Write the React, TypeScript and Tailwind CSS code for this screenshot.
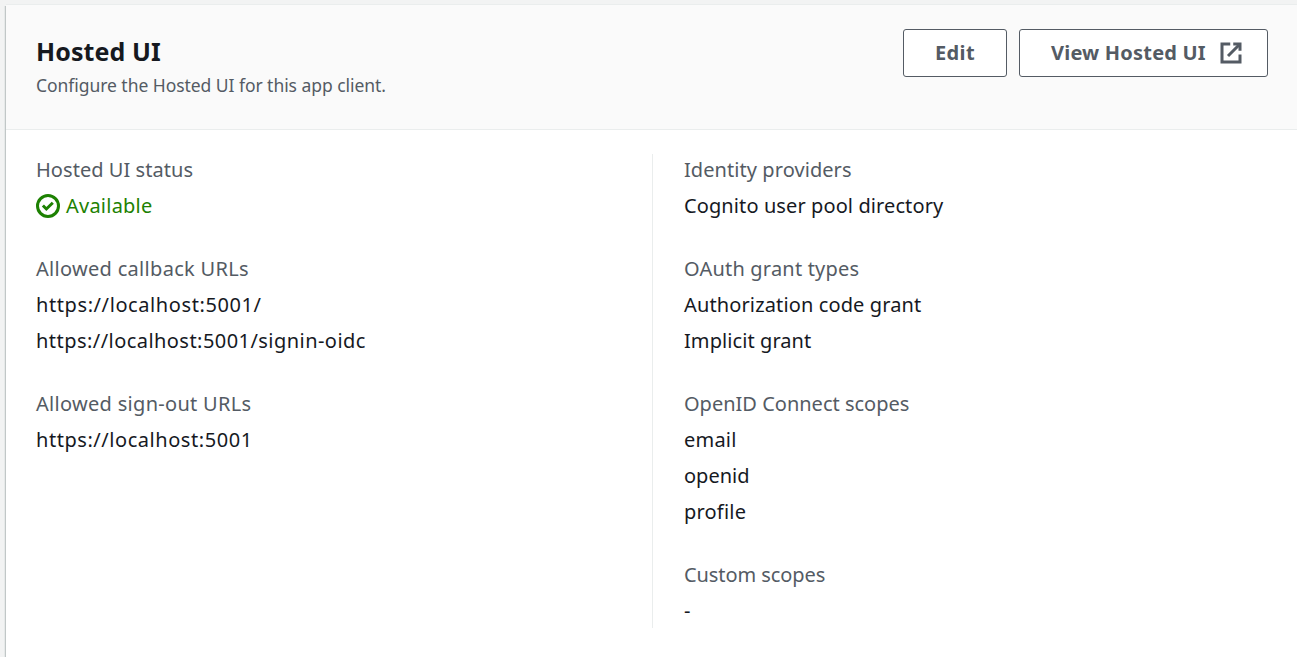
import type { ReactNode } from 'react';

type Line = { text: string; tracking: string };
type Field = { label: Line; values: Line[] };

const statusLabel: Line = { text: 'Hosted UI status', tracking: 'tracking-[0.05px]' };

const urlFields: Field[] = [
  {
    label: { text: 'Allowed callback URLs', tracking: 'tracking-[0.3px]' },
    values: [
      { text: 'https://localhost:5001/', tracking: 'tracking-[0.59px]' },
      { text: 'https://localhost:5001/signin-oidc', tracking: 'tracking-[0.45px]' },
    ],
  },
  {
    label: { text: 'Allowed sign-out URLs', tracking: 'tracking-[0.3px]' },
    values: [{ text: 'https://localhost:5001', tracking: 'tracking-[0.55px]' }],
  },
];

const providerFields: Field[] = [
  {
    label: { text: 'Identity providers', tracking: 'tracking-[0.07px]' },
    values: [{ text: 'Cognito user pool directory', tracking: 'tracking-[0.1px]' }],
  },
  {
    label: { text: 'OAuth grant types', tracking: 'tracking-[0.2px]' },
    values: [
      { text: 'Authorization code grant', tracking: 'tracking-[0.13px]' },
      { text: 'Implicit grant', tracking: 'tracking-[0.08px]' },
    ],
  },
  {
    label: { text: 'OpenID Connect scopes', tracking: 'tracking-normal' },
    values: [
      { text: 'email', tracking: 'tracking-[0.2px]' },
      { text: 'openid', tracking: 'tracking-normal' },
      { text: 'profile', tracking: 'tracking-[0.2px]' },
    ],
  },
  {
    label: { text: 'Custom scopes', tracking: 'tracking-[-0.08px]' },
    values: [{ text: '-', tracking: 'tracking-normal' }],
  },
];

function FieldBlock({ label, children }: { label: Line; children: ReactNode }) {
  return (
    <div>
      <div className={`text-[#545b64] ${label.tracking}`}>{label.text}</div>
      {children}
    </div>
  );
}

function Fields({ items }: { items: Field[] }) {
  return (
    <>
      {items.map((f) => (
        <FieldBlock key={f.label.text} label={f.label}>
          {f.values.map((v) => (
            <div key={v.text} className={v.tracking}>{v.text}</div>
          ))}
        </FieldBlock>
      ))}
    </>
  );
}

function CheckIcon() {
  return (
    <svg className="size-6 shrink-0" viewBox="0 0 16 16" fill="none" stroke="currentColor" strokeWidth="2">
      <circle cx="8" cy="8" r="7" />
      <path d="m4.6 7.7 2.3 2.3 4.3-4.2" />
    </svg>
  );
}

function ExternalIcon() {
  return (
    <svg className="size-6 shrink-0" viewBox="0 0 16 16" fill="none" stroke="currentColor" strokeWidth="2">
      <path d="M9.5 2H14v4.5" />
      <path d="m6 10 8-8" />
      <path d="M14 9v5H2V2h5.5" />
    </svg>
  );
}

export default function App() {
  return (
    <div className="h-[657px] w-full overflow-hidden bg-[#f2f3f3] pl-1.5 pt-[5px] font-['Noto_Sans',sans-serif] text-xl leading-9 text-[#16191f]">
      <section className="h-full bg-white shadow-[0_-1px_0_0_#eaeded,-1px_1px_0_0_#c1c7c7,-2px_1px_0_0_#e6e9e9]">
        <header className="flex h-[125px] items-start justify-between border-b border-[#eaeded] bg-[#fafafa] pl-[30px] pr-[29px] pt-6">
          <div className="pt-1">
            <h2 className="text-[25px] font-bold leading-9 tracking-[0.1px]">Hosted UI</h2>
            <p className="pt-px text-[17.5px] leading-[31px] tracking-[-0.05px] text-[#545b64]">
              Configure the Hosted UI for this app client.
            </p>
          </div>
          <div className="flex gap-3 font-bold text-[#545b64]">
            <button className="flex h-12 w-[104px] items-center rounded-[3px] border border-[#545b64] bg-white pl-[31px] tracking-[0.39px]">
              Edit
            </button>
            <button className="flex h-12 w-[249px] items-center justify-between rounded-[3px] border border-[#545b64] bg-white pl-[31px] pr-6 tracking-[0.2px]">
              View Hosted UI
              <ExternalIcon />
            </button>
          </div>
        </header>
        <div className="flex pt-6">
          <div className="-mt-0.5 flex w-[646px] flex-col gap-[27px] pl-[30px]">
            <FieldBlock label={statusLabel}>
              <div className="flex items-center gap-1.5 tracking-[0.23px] text-[#1d8102]">
                <CheckIcon />
                Available
              </div>
            </FieldBlock>
            <Fields items={urlFields} />
          </div>
          <div className="h-[474px] border-l border-[#eaeded] pl-[31px]">
            <div className="-mt-0.5 flex flex-col gap-[27px]">
              <Fields items={providerFields} />
            </div>
          </div>
        </div>
      </section>
    </div>
  );
}
